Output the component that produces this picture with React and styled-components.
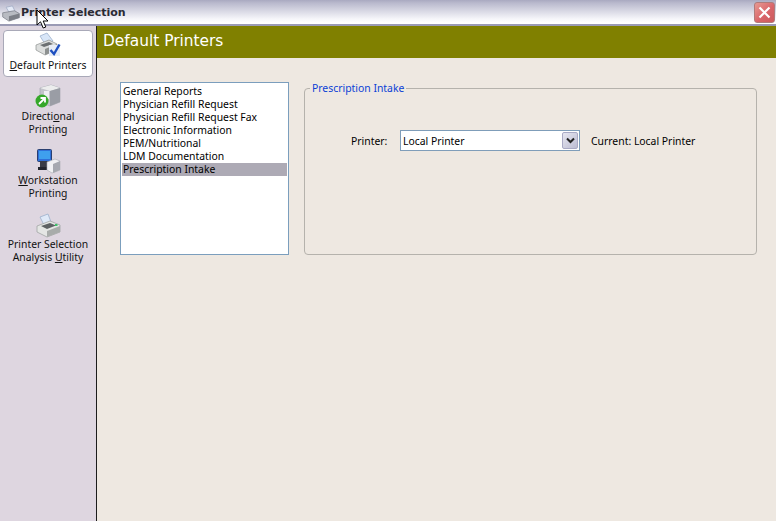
import React from "react";
import styled, { createGlobalStyle } from "styled-components";

const GlobalStyle = createGlobalStyle`
  html, body { margin: 0; padding: 0; height: 100%; overflow: hidden; }
  body { font-family: "Noto Sans", "Open Sans", sans-serif; font-size: 10.4px; color: #000; }
  #root { height: 100%; }
`;

const Window = styled.div`
  position: relative;
  width: 776px;
  height: 521px;
  display: flex;
  flex-direction: column;
  background: #eee8e1;
  overflow: hidden;
`;

const TitleBar = styled.div`
  height: 26px;
  box-sizing: border-box;
  flex: none;
  display: flex;
  align-items: center;
  padding: 0 1px 0 2px;
  gap: 1px;
  background: linear-gradient(#a9a9c0 0, #b9b9cd 3px, #d8d8e4 11px, #f6f6fa 19px, #ffffff 23px, #ffffff 24px, #9a9ab4 24px);
`;

const Title = styled.div`
  flex: 1;
  font-family: "DejaVu Sans", sans-serif;
  font-size: 11px;
  font-weight: bold;
  color: #2a2a34;
  padding-bottom: 1px;
`;

const CloseButton = styled.div`
  width: 21px;
  height: 21px;
  margin-bottom: 2px;
  box-sizing: border-box;
  border: 1px solid #b07a7a;
  border-radius: 3px;
  background: linear-gradient(135deg, #e89a92, #d9656a 55%, #cc5a5c);
  display: flex;
  align-items: center;
  justify-content: center;
`;

const Body = styled.div`
  flex: 1;
  display: flex;
  min-height: 0;
`;

const Sidebar = styled.nav`
  width: 97px;
  flex: none;
  box-sizing: border-box;
  border-right: 1px solid #1c1c1c;
  background: #ded6e0;
  padding: 4px 3px 0 3px;
  display: flex;
  flex-direction: column;
  gap: 4px;
`;

const NavItem = styled.div`
  box-sizing: border-box;
  width: 90px;
  padding: 2px 0 4px;
  border: 1px solid ${(p) => (p.$active ? "#a9a9b8" : "transparent")};
  border-radius: 4px;
  background: ${(p) => (p.$active ? "#fff" : "transparent")};
  display: flex;
  flex-direction: column;
  align-items: center;
  text-align: center;
  line-height: 13px;
  color: #111;
  white-space: nowrap;

  u { text-underline-offset: 1px; }
`;

const IconBox = styled.div`
  width: 26px;
  height: 24px;
  margin-bottom: 2px;
  svg { display: block; overflow: visible; }
`;

const Main = styled.main`
  flex: 1;
  display: flex;
  flex-direction: column;
  min-width: 0;
`;

const Header = styled.header`
  height: 32px;
  flex: none;
  background: #808000;
  color: #fff;
  font-family: "DejaVu Sans", sans-serif;
  font-size: 15.4px;
  line-height: 31px;
  padding-left: 6px;
`;

const Content = styled.div`
  display: flex;
  gap: 15px;
  padding: 24px 19px 0 23px;
  align-items: flex-end;
`;

const ListBox = styled.ul`
  list-style: none;
  margin: 0;
  padding: 2px 1px 0;
  width: 169px;
  height: 173px;
  box-sizing: border-box;
  flex: none;
  background: #fff;
  border: 1px solid #7b9ebd;
`;

const ListRow = styled.li`
  height: 13px;
  line-height: 13px;
  padding-left: 1px;
  white-space: nowrap;
  background: ${(p) => (p.$selected ? "#adaab5" : "transparent")};
`;

const Group = styled.fieldset`
  flex: 1;
  margin: 0;
  height: 173px;
  box-sizing: border-box;
  border: 1px solid #b5b2ac;
  border-radius: 4px;
  padding: 0;
  min-width: 0;
`;

const GroupLegend = styled.legend`
  margin-left: 5px;
  padding: 0 2px;
  color: #0b3fd6;
  line-height: 13px;
`;

const FieldRow = styled.div`
  display: flex;
  align-items: center;
  padding: 35px 0 0 46px;
`;

const FieldLabel = styled.label`
  width: 49px;
  flex: none;
`;

const Select = styled.div`
  width: 180px;
  height: 21px;
  box-sizing: border-box;
  border: 1px solid #7f9db9;
  background: #fff;
  display: flex;
  align-items: center;
  padding: 1px 1px 1px 2px;
`;

const SelectValue = styled.div`
  flex: 1;
`;

const SelectArrow = styled.div`
  width: 16px;
  height: 17px;
  box-sizing: border-box;
  border: 1px solid #a9a9c4;
  border-radius: 2px;
  background: linear-gradient(135deg, #e6e6f0, #bcbcd2);
  display: flex;
  align-items: center;
  justify-content: center;
`;

const CurrentText = styled.div`
  margin-left: 11px;
`;

const Cursor = styled.svg`
  position: absolute;
  left: 36px;
  top: 9px;
`;

const PrinterIcon = () => (
  <svg width="26" height="24" viewBox="0 0 26 24">
    <path d="M5 5 L13 2 L16 10 L9 13 Z" fill="#dfe9f8" stroke="#9cb0cc" strokeWidth="0.8" />
    <path d="M2 14 L15 9 L25 13 L25 20 L12 25 L2 20 Z" fill="#e4e6e4" stroke="#9a9e9c" strokeWidth="0.7" />
    <path d="M6 14 L15 11 L21 13.5 L12 17 Z" fill="#5e6264" />
    <path d="M12 19 L25 14 L25 20 L12 25 Z" fill="#a8acaa" />
    <rect x="20" y="12" width="2.5" height="2" fill="#3fbf6a" />
  </svg>
);

const DefaultIcon = () => (
  <svg width="26" height="24" viewBox="0 0 26 24">
    <path d="M5 3 L12 0 L18 8 L10 11 Z" fill="#d8e6f8" stroke="#9cb0cc" strokeWidth="0.8" />
    <path d="M1 12 L14 7 L22 11 L22 17 L10 22 L1 17 Z" fill="#dcdedd" stroke="#8e9290" strokeWidth="0.7" />
    <path d="M5 12 L14 9 L18 11 L9 14 Z" fill="#6c7072" />
    <path d="M10 16 L22 11 L22 17 L10 22 Z" fill="#8d9190" />
    <rect x="14" y="12" width="11" height="11" fill="#e6ecf6" />
    <path d="M15.5 17 L19 21 L24.5 11.5" fill="none" stroke="#1d4fc0" strokeWidth="2.4" />
  </svg>
);

const DirectionalIcon = () => (
  <svg width="26" height="24" viewBox="0 0 26 24">
    <path d="M5 4 L16 1 L25 4 L25 18 L15 22 L5 18 Z" fill="#c2c4ca" stroke="#a0a3ab" strokeWidth="0.6" />
    <path d="M5 4 L16 1 L25 4 L15 7 Z" fill="#eceded" />
    <path d="M15 7 L25 4 L25 18 L15 22 Z" fill="#9a9da5" />
    <rect x="9" y="7" width="5" height="8" fill="#eeeff2" />
    <circle cx="7" cy="17" r="6.5" fill="#36a82a" />
    <path d="M4 20 L9.5 14.5 M5.5 14 L10 14 L10 18.5" fill="none" stroke="#fff" strokeWidth="1.8" />
  </svg>
);

const WorkstationIcon = () => (
  <svg width="26" height="24" viewBox="0 0 26 24">
    <rect x="2.5" y="1.5" width="14" height="12" rx="1" fill="#2f6fd8" stroke="#2a3f70" />
    <rect x="4" y="3" width="11" height="8" fill="#3fa0ee" />
    <rect x="5" y="13" width="8" height="7" fill="#3a3d46" />
    <rect x="3" y="19" width="11" height="3" fill="#23262e" />
    <path d="M12 14 L20 11 L25 13 L25 22 L17 25 L12 22 Z" fill="#f0f1f3" stroke="#a8abb2" strokeWidth="0.6" />
    <path d="M18 16 L25 13 L25 22 L18 25 Z" fill="#a6a9b0" />
  </svg>
);

const CursorIcon = () => (
  <Cursor width="14" height="21" viewBox="0 0 14 21">
    <path d="M1 1 L1 16 L4.5 12.8 L7.2 19 L9.8 18 L7.2 12 L12 12 Z" fill="#fff" stroke="#000" strokeWidth="1" />
  </Cursor>
);

const navItems = [
  { key: "default", active: true, icon: <DefaultIcon />, label: <><u>D</u>efault Printers</> },
  { key: "directional", icon: <DirectionalIcon />, label: <>Directi<u>o</u>nal<br />Printing</> },
  { key: "workstation", icon: <WorkstationIcon />, label: <><u>W</u>orkstation<br />Printing</> },
  { key: "analysis", icon: <PrinterIcon />, label: <>Printer Selection<br />Analysis <u>U</u>tility</> },
];

const reports = [
  "General Reports",
  "Physician Refill Request",
  "Physician Refill Request Fax",
  "Electronic Information",
  "PEM/Nutritional",
  "LDM Documentation",
  "Prescription Intake",
];

export default function App() {
  return (
    <Window>
      <GlobalStyle />
      <TitleBar>
        <svg width="18" height="17" viewBox="0 0 26 24">
          <path d="M6 3 L15 1 L19 9 L10 10 Z" fill="#e4eaf6" stroke="#9aa6c0" />
          <path d="M1 11 L18 8 L25 12 L25 18 L10 23 L1 17 Z" fill="#b8bbc2" stroke="#777a84" />
          <path d="M10 16 L10 23 L25 18 L25 12 Z" fill="#7c7f87" />
        </svg>
        <Title>Printer Selection</Title>
        <CloseButton>
          <svg width="13" height="13" viewBox="0 0 13 13">
            <path d="M1.5 1.5 L11.5 11.5 M11.5 1.5 L1.5 11.5" stroke="#fff" strokeWidth="2.2" />
          </svg>
        </CloseButton>
      </TitleBar>
      <Body>
        <Sidebar>
          {navItems.map((item) => (
            <NavItem key={item.key} $active={item.active}>
              <IconBox>{item.icon}</IconBox>
              <div>{item.label}</div>
            </NavItem>
          ))}
        </Sidebar>
        <Main>
          <Header>Default Printers</Header>
          <Content>
            <ListBox>
              {reports.map((r) => (
                <ListRow key={r} $selected={r === "Prescription Intake"}>{r}</ListRow>
              ))}
            </ListBox>
            <Group>
              <GroupLegend>Prescription Intake</GroupLegend>
              <FieldRow>
                <FieldLabel>Printer:</FieldLabel>
                <Select>
                  <SelectValue>Local Printer</SelectValue>
                  <SelectArrow>
                    <svg width="9" height="7" viewBox="0 0 9 7">
                      <path d="M1 1.5 L4.5 5 L8 1.5" fill="none" stroke="#222" strokeWidth="2" />
                    </svg>
                  </SelectArrow>
                </Select>
                <CurrentText>Current: Local Printer</CurrentText>
              </FieldRow>
            </Group>
          </Content>
        </Main>
      </Body>
      <CursorIcon />
    </Window>
  );
}
